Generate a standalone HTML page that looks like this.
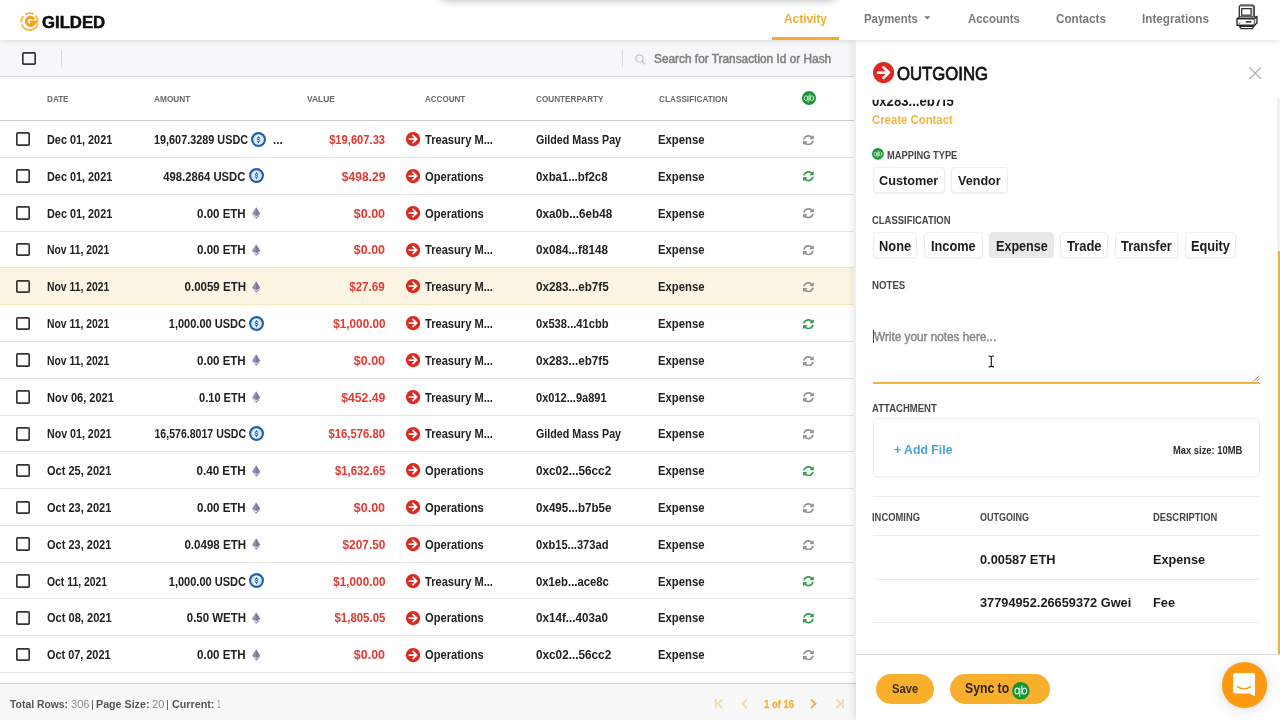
<!DOCTYPE html>
<html lang="en"><head><meta charset="utf-8"><title>Gilded - Activity</title>
<style>
html,body{margin:0;padding:0}
body{width:1280px;height:720px;overflow:hidden;position:relative;background:#fff;font-family:'Liberation Sans',sans-serif;color:#222}
.t{position:absolute;display:block;white-space:pre;line-height:1;margin:0}
.i{position:absolute;display:block;overflow:visible}
.abs,.hdr,.toolbar,.tfoot,.row,.ln,.btn,.cb,.panel{position:absolute;display:block;box-sizing:border-box;margin:0;padding:0}
nav,main,aside,section,footer,.tr,.thead,.tbody,.grp,a,button,label,h2,ul,li{position:static;display:block;margin:0;padding:0;border:0;background:none;font:inherit;color:inherit;list-style:none;text-decoration:none}
.cb{box-shadow:inset 0 0 0 1.65px #333;border-radius:1.8px;background:transparent}
.row{left:0;width:854px;border-bottom:1px solid #e4e4e4}
.row.sel{background:#fdf5e4;border-bottom-color:#f6e4bb;box-shadow:0 -1px 0 #f6e4bb}
.ln{height:1px;background:#ebebeb;left:872.7px;width:387.5px}
.btn{border:1px solid #eee;border-radius:3.5px;background:#fff;box-shadow:0 1px 1.5px rgba(0,0,0,.05)}
.btn.on{background:#e8e8e8;border-color:#e8e8e8;box-shadow:none}
.pill{position:absolute;background:#f9ae2c;border-radius:15px}
</style></head>
<body>
<div id="app" style="position:absolute;left:0;top:0;width:1280px;height:720px;overflow:hidden;will-change:transform">
<header class="hdr" style="left:0;top:0;width:1280px;height:40px;background:#fff;box-shadow:0 1px 5px rgba(0,0,0,.13);z-index:5">
<svg class="i" style="left:20.20px;top:11.90px;" width="19.20" height="19.20" viewBox="0 0 20 20"><circle cx="10" cy="10" r="8.8" fill="none" stroke="#f7b745" stroke-width="1.9" stroke-dasharray="6 2.2 7 2.4 22 2.4 7 2.4 3.9 0" transform="rotate(-100 10 10)"/><path d="M14.6 7.7A4.3 4.3 0 1 0 15 10.6H10.2" fill="none" stroke="#f5a21c" stroke-width="3.1"/><path d="M13 10.6h5.4" stroke="#f5a21c" stroke-width="3.1"/></svg>
<span class="t " style="top:14.00px;font-size:17.4px;font-weight:700;color:#0c0c0c;left:41.50px;transform-origin:0 14px;transform:scaleX(0.9618);-webkit-text-stroke:0.5px #0c0c0c;">GILDED</span>
<nav>
<span class="t " style="top:13.00px;font-size:12px;font-weight:700;color:#f0ae35;left:784.12px;transform-origin:0 10px;transform:scaleX(0.9908);">Activity</span>
<span class="t " style="top:13.00px;font-size:12px;font-weight:700;color:#7b7b7b;left:863.72px;transform-origin:0 10px;transform:scaleX(0.9481);">Payments</span>
<svg class="i" style="left:923.60px;top:16.40px;" width="6.60" height="3.60" viewBox="0 0 10 5"><path d="M0 0h10L5 5z" fill="#7b7b7b"/></svg>
<span class="t " style="top:13.00px;font-size:12px;font-weight:700;color:#7b7b7b;left:967.52px;transform-origin:0 10px;transform:scaleX(0.9501);">Accounts</span>
<span class="t " style="top:13.00px;font-size:12px;font-weight:700;color:#7b7b7b;left:1055.92px;transform-origin:0 10px;transform:scaleX(0.9730);">Contacts</span>
<span class="t " style="top:13.00px;font-size:12px;font-weight:700;color:#7b7b7b;left:1141.82px;transform-origin:0 10px;transform:scaleX(0.9751);">Integrations</span>
<div class="abs" style="left:772.3px;top:37.2px;width:66.7px;height:2.8px;background:#f4ac2c"></div>
</nav>
<svg class="i" style="left:1236.00px;top:3.60px;" width="22.40" height="25.40" viewBox="0 0 22 25"><g fill="none" stroke="#2b2b2b"><path d="M4.6 1.2h11.8l1.6 1.2v10.2H3.2V2.4z" fill="#fff" stroke-width="1.3"/><path d="M4.2 1.6h12.6" stroke-width="1.8" stroke="#666"/><path d="M17.3 2.6v10" stroke-width="1.8" stroke="#666"/><rect x="5.6" y="4.6" width="9.2" height="6.4" fill="#fff" stroke-width="1.2"/><path d="M1 14.6h17.2v6.4H1z" fill="#fff" stroke-width="1.4"/><path d="M18.2 14.6l2.4-2v6l-2.4 2.4" stroke-width="1.3" fill="#ddd"/><path d="M3.2 13l-2.2 1.6M20.6 12.6H18" stroke-width="1.2"/><path d="M9.6 17.6h5.4" stroke-width="1.5"/><path d="M3.6 18.2v1.2" stroke-width="1"/><path d="M3.4 22h14.2l-1.6 2.2H5z" fill="#fff" stroke-width="1.2"/></g></svg>
</header>
<div class="abs" style="z-index:10;left:441px;top:-42px;width:394px;height:40px;background:#fff;border-radius:0 0 5px 5px;box-shadow:0 2px 8px rgba(0,0,0,.33)"></div>
<section>
<div class="toolbar" style="left:0;top:40px;width:854px;height:36.6px;background:#f6f7f9;border-bottom:1px solid #d6d9dd">
<span class="cb" style="left:22.30px;top:11.90px;width:13.6px;height:13.6px"></span>
<div class="abs" style="left:61px;top:10px;width:1.3px;height:16.6px;background:#d9dbde"></div>
<div class="abs" style="left:621.7px;top:10px;width:1.3px;height:16.6px;background:#d9dbde"></div>
<svg class="i" style="left:635.20px;top:14.00px;" width="11.00" height="11.00" viewBox="0 0 11 11"><circle cx="4.4" cy="4.4" r="3.6" fill="none" stroke="#c4c4c4" stroke-width="1.2"/><path d="M7 7l3.4 3.4" stroke="#c4c4c4" stroke-width="1.3"/></svg>
</div>
<span class="t " style="top:53.00px;font-size:12px;color:#808080;left:653.82px;transform-origin:0 10px;transform:scaleX(0.9874);-webkit-text-stroke:0.5px #808080;">Search for Transaction Id or Hash</span>
</section>
<main>
<div class="thead">
<div class="abs" style="left:0;top:119.5px;width:854px;height:1.6px;background:#cdcdcd"></div>
<span class="t " style="top:94.00px;font-size:9.4px;font-weight:700;color:#6a6a6a;left:46.82px;transform-origin:0 8px;transform:scaleX(0.8680);">DATE</span>
<span class="t " style="top:94.00px;font-size:9.4px;font-weight:700;color:#6a6a6a;left:153.82px;transform-origin:0 8px;transform:scaleX(0.8836);">AMOUNT</span>
<span class="t " style="top:94.00px;font-size:9.4px;font-weight:700;color:#6a6a6a;left:306.62px;transform-origin:0 8px;transform:scaleX(0.8994);">VALUE</span>
<span class="t " style="top:94.00px;font-size:9.4px;font-weight:700;color:#6a6a6a;left:425.32px;transform-origin:0 8px;transform:scaleX(0.8566);">ACCOUNT</span>
<span class="t " style="top:94.00px;font-size:9.4px;font-weight:700;color:#6a6a6a;left:536.22px;transform-origin:0 8px;transform:scaleX(0.8723);">COUNTERPARTY</span>
<span class="t " style="top:94.00px;font-size:9.4px;font-weight:700;color:#6a6a6a;left:658.52px;transform-origin:0 8px;transform:scaleX(0.8768);">CLASSIFICATION</span>
<svg class="i" style="left:801.60px;top:91.30px;" width="14.00" height="14.00" viewBox="0 0 20 20"><circle cx="10" cy="10" r="10" fill="#1a9236"/><g fill="none" stroke="#d3f7da" stroke-width="1.3" stroke-linecap="round"><ellipse cx="5.8" cy="10.3" rx="2.45" ry="3.4"/><path d="M8.75 6.8v9.3"/><ellipse cx="14.2" cy="10.3" rx="2.45" ry="3.4"/><path d="M11.25 4.3v9.3"/></g></svg>
</div>
<div class="tbody">
<div class="tr">
<div class="row" style="top:121px;height:37px"></div>
<span class="cb" style="left:16.40px;top:132.40px;width:13.6px;height:13.6px"></span>
<span class="t " style="top:134.00px;font-size:12px;font-weight:700;color:#222;left:46.92px;transform-origin:0 10px;transform:scaleX(0.9056);">Dec 01, 2021</span>
<span class="t " style="top:134.00px;font-size:12px;font-weight:700;color:#222;left:153.92px;transform-origin:0 10px;transform:scaleX(0.9037);">19,607.3289 USDC</span>
<svg class="i" style="left:251.30px;top:131.60px;" width="15.00" height="15.00" viewBox="0 0 20 20"><circle cx="10" cy="10" r="10" fill="#1d5fab"/><circle cx="10" cy="10" r="7.1" fill="#eaf4ff"/><g fill="none" stroke-linecap="round"><path d="M7.2 4.9A5.6 5.6 0 0 0 7.2 15.1M12.8 4.9A5.6 5.6 0 0 1 12.8 15.1" stroke="#a9c6e8" stroke-width="0.9"/><path d="M11.9 8.5c-.3-1.4-3.7-1.5-3.7.2 0 1.7 3.7.9 3.7 2.7 0 1.7-3.4 1.7-3.8.2M10 5.9v1.3M10 12.9v1.3" stroke="#2c6cc0" stroke-width="1.35"/></g></svg>
<span class="t " style="top:134.00px;font-size:12px;font-weight:700;color:#222;left:273.02px;transform-origin:0 10px;transform:scaleX(0.9745);">...</span>
<span class="t " style="top:134.00px;font-size:12px;font-weight:700;color:#dd3b33;right:894.82px;transform-origin:100% 10px;transform:scaleX(0.9312);">$19,607.33</span>
<svg class="i" style="left:406.00px;top:132.10px;" width="14.20" height="14.20" viewBox="8 8 496 496"><path fill="#e0281e" d="M256 8c137 0 248 111 248 248S393 504 256 504 8 393 8 256 119 8 256 8zm-28.9 143.6l75.5 72.4H120c-13.3 0-24 10.7-24 24v16c0 13.3 10.7 24 24 24h182.6l-75.5 72.4c-9.7 9.3-9.9 24.8-.4 34.3l11 10.9c9.4 9.4 24.6 9.4 33.9 0L404.3 273c9.4-9.4 9.4-24.6 0-33.9L271.6 106.3c-9.4-9.4-24.6-9.4-33.9 0l-11 10.9c-9.5 9.6-9.3 25.1.4 34.4z"/></svg>
<span class="t " style="top:134.00px;font-size:12px;font-weight:700;color:#222;left:425.32px;transform-origin:0 10px;transform:scaleX(0.9262);">Treasury M...</span>
<span class="t " style="top:134.00px;font-size:12px;font-weight:700;color:#222;left:536.12px;transform-origin:0 10px;transform:scaleX(0.8918);">Gilded Mass Pay</span>
<span class="t " style="top:134.00px;font-size:12px;font-weight:700;color:#222;left:658.42px;transform-origin:0 10px;transform:scaleX(0.9433);">Expense</span>
<svg preserveAspectRatio="none" class="i" style="left:803.10px;top:134.60px;overflow:hidden;" width="10.80" height="10.40" viewBox="8 8 496 496"><path fill="#939393" d="M370.72 133.28C339.458 104.008 298.888 87.962 255.848 88c-77.458.068-144.328 53.178-162.791 126.85-1.344 5.363-6.122 9.15-11.651 9.15H24.103c-7.498 0-13.194-6.807-11.807-14.176C33.933 94.924 134.813 8 256 8c66.448 0 126.791 26.136 171.315 68.685L463.03 40.97C478.149 25.851 504 36.559 504 57.941V192c0 13.255-10.745 24-24 24H345.941c-21.382 0-32.09-25.851-16.971-40.971l41.75-41.749zM32 296h134.059c21.382 0 32.09 25.851 16.971 40.971l-41.75 41.75c31.262 29.273 71.835 45.319 114.876 45.28 77.418-.07 144.315-53.144 162.787-126.849 1.344-5.363 6.122-9.15 11.651-9.15h57.304c7.498 0 13.194 6.807 11.807 14.176C478.067 417.076 377.187 504 256 504c-66.448 0-126.791-26.136-171.315-68.685L48.97 471.03C33.851 486.149 8 475.441 8 454.059V320c0-13.255 10.745-24 24-24z"/></svg>
</div>
<div class="tr">
<div class="row" style="top:158px;height:37px"></div>
<span class="cb" style="left:16.40px;top:169.22px;width:13.6px;height:13.6px"></span>
<span class="t " style="top:171.00px;font-size:12px;font-weight:700;color:#222;left:46.92px;transform-origin:0 10px;transform:scaleX(0.9056);">Dec 01, 2021</span>
<span class="t " style="top:171.00px;font-size:12px;font-weight:700;color:#222;right:1034.22px;transform-origin:100% 10px;transform:scaleX(0.9401);">498.2864 USDC</span>
<svg class="i" style="left:248.90px;top:168.42px;" width="15.00" height="15.00" viewBox="0 0 20 20"><circle cx="10" cy="10" r="10" fill="#1d5fab"/><circle cx="10" cy="10" r="7.1" fill="#eaf4ff"/><g fill="none" stroke-linecap="round"><path d="M7.2 4.9A5.6 5.6 0 0 0 7.2 15.1M12.8 4.9A5.6 5.6 0 0 1 12.8 15.1" stroke="#a9c6e8" stroke-width="0.9"/><path d="M11.9 8.5c-.3-1.4-3.7-1.5-3.7.2 0 1.7 3.7.9 3.7 2.7 0 1.7-3.4 1.7-3.8.2M10 5.9v1.3M10 12.9v1.3" stroke="#2c6cc0" stroke-width="1.35"/></g></svg>
<span class="t " style="top:171.00px;font-size:12px;font-weight:700;color:#dd3b33;right:894.82px;transform-origin:100% 10px;transform:scaleX(1.0059);">$498.29</span>
<svg class="i" style="left:406.00px;top:168.92px;" width="14.20" height="14.20" viewBox="8 8 496 496"><path fill="#e0281e" d="M256 8c137 0 248 111 248 248S393 504 256 504 8 393 8 256 119 8 256 8zm-28.9 143.6l75.5 72.4H120c-13.3 0-24 10.7-24 24v16c0 13.3 10.7 24 24 24h182.6l-75.5 72.4c-9.7 9.3-9.9 24.8-.4 34.3l11 10.9c9.4 9.4 24.6 9.4 33.9 0L404.3 273c9.4-9.4 9.4-24.6 0-33.9L271.6 106.3c-9.4-9.4-24.6-9.4-33.9 0l-11 10.9c-9.5 9.6-9.3 25.1.4 34.4z"/></svg>
<span class="t " style="top:171.00px;font-size:12px;font-weight:700;color:#222;left:425.32px;transform-origin:0 10px;transform:scaleX(0.9274);">Operations</span>
<span class="t " style="top:171.00px;font-size:12px;font-weight:700;color:#222;left:536.12px;transform-origin:0 10px;transform:scaleX(0.9481);">0xba1...bf2c8</span>
<span class="t " style="top:171.00px;font-size:12px;font-weight:700;color:#222;left:658.42px;transform-origin:0 10px;transform:scaleX(0.9433);">Expense</span>
<svg preserveAspectRatio="none" class="i" style="left:803.10px;top:171.42px;overflow:hidden;" width="10.80" height="10.40" viewBox="8 8 496 496"><path fill="#34a04c" d="M370.72 133.28C339.458 104.008 298.888 87.962 255.848 88c-77.458.068-144.328 53.178-162.791 126.85-1.344 5.363-6.122 9.15-11.651 9.15H24.103c-7.498 0-13.194-6.807-11.807-14.176C33.933 94.924 134.813 8 256 8c66.448 0 126.791 26.136 171.315 68.685L463.03 40.97C478.149 25.851 504 36.559 504 57.941V192c0 13.255-10.745 24-24 24H345.941c-21.382 0-32.09-25.851-16.971-40.971l41.75-41.749zM32 296h134.059c21.382 0 32.09 25.851 16.971 40.971l-41.75 41.75c31.262 29.273 71.835 45.319 114.876 45.28 77.418-.07 144.315-53.144 162.787-126.849 1.344-5.363 6.122-9.15 11.651-9.15h57.304c7.498 0 13.194 6.807 11.807 14.176C478.067 417.076 377.187 504 256 504c-66.448 0-126.791-26.136-171.315-68.685L48.97 471.03C33.851 486.149 8 475.441 8 454.059V320c0-13.255 10.745-24 24-24z"/></svg>
</div>
<div class="tr">
<div class="row" style="top:195px;height:37px"></div>
<span class="cb" style="left:16.40px;top:206.04px;width:13.6px;height:13.6px"></span>
<span class="t " style="top:208.00px;font-size:12px;font-weight:700;color:#222;left:46.92px;transform-origin:0 10px;transform:scaleX(0.9056);">Dec 01, 2021</span>
<span class="t " style="top:208.00px;font-size:12px;font-weight:700;color:#222;right:1034.22px;transform-origin:100% 10px;transform:scaleX(0.9597);">0.00 ETH</span>
<svg class="i" style="left:252.40px;top:207.04px;" width="8.20" height="11.80" viewBox="0 0 10 14"><path d="M5 0L0 8.2 5 11.2 10 8.2z" fill="#8e8fb0"/><path d="M5 0v11.2L10 8.2z" fill="#7b7c9c"/><path d="M0 9.3L5 14 10 9.3 5 12.3z" fill="#9a9bb9"/><path d="M5 14l5-4.7-5 3z" fill="#8586a6"/></svg>
<span class="t " style="top:208.00px;font-size:12px;font-weight:700;color:#dd3b33;right:894.82px;transform-origin:100% 10px;transform:scaleX(1.0408);">$0.00</span>
<svg class="i" style="left:406.00px;top:205.74px;" width="14.20" height="14.20" viewBox="8 8 496 496"><path fill="#e0281e" d="M256 8c137 0 248 111 248 248S393 504 256 504 8 393 8 256 119 8 256 8zm-28.9 143.6l75.5 72.4H120c-13.3 0-24 10.7-24 24v16c0 13.3 10.7 24 24 24h182.6l-75.5 72.4c-9.7 9.3-9.9 24.8-.4 34.3l11 10.9c9.4 9.4 24.6 9.4 33.9 0L404.3 273c9.4-9.4 9.4-24.6 0-33.9L271.6 106.3c-9.4-9.4-24.6-9.4-33.9 0l-11 10.9c-9.5 9.6-9.3 25.1.4 34.4z"/></svg>
<span class="t " style="top:208.00px;font-size:12px;font-weight:700;color:#222;left:425.32px;transform-origin:0 10px;transform:scaleX(0.9274);">Operations</span>
<span class="t " style="top:208.00px;font-size:12px;font-weight:700;color:#222;left:536.12px;transform-origin:0 10px;transform:scaleX(0.9757);">0xa0b...6eb48</span>
<span class="t " style="top:208.00px;font-size:12px;font-weight:700;color:#222;left:658.42px;transform-origin:0 10px;transform:scaleX(0.9433);">Expense</span>
<svg preserveAspectRatio="none" class="i" style="left:803.10px;top:208.24px;overflow:hidden;" width="10.80" height="10.40" viewBox="8 8 496 496"><path fill="#939393" d="M370.72 133.28C339.458 104.008 298.888 87.962 255.848 88c-77.458.068-144.328 53.178-162.791 126.85-1.344 5.363-6.122 9.15-11.651 9.15H24.103c-7.498 0-13.194-6.807-11.807-14.176C33.933 94.924 134.813 8 256 8c66.448 0 126.791 26.136 171.315 68.685L463.03 40.97C478.149 25.851 504 36.559 504 57.941V192c0 13.255-10.745 24-24 24H345.941c-21.382 0-32.09-25.851-16.971-40.971l41.75-41.749zM32 296h134.059c21.382 0 32.09 25.851 16.971 40.971l-41.75 41.75c31.262 29.273 71.835 45.319 114.876 45.28 77.418-.07 144.315-53.144 162.787-126.849 1.344-5.363 6.122-9.15 11.651-9.15h57.304c7.498 0 13.194 6.807 11.807 14.176C478.067 417.076 377.187 504 256 504c-66.448 0-126.791-26.136-171.315-68.685L48.97 471.03C33.851 486.149 8 475.441 8 454.059V320c0-13.255 10.745-24 24-24z"/></svg>
</div>
<div class="tr">
<div class="row" style="top:232px;height:36px"></div>
<span class="cb" style="left:16.40px;top:242.86px;width:13.6px;height:13.6px"></span>
<span class="t " style="top:244.00px;font-size:12px;font-weight:700;color:#222;left:46.92px;transform-origin:0 10px;transform:scaleX(0.8631);">Nov 11, 2021</span>
<span class="t " style="top:244.00px;font-size:12px;font-weight:700;color:#222;right:1034.22px;transform-origin:100% 10px;transform:scaleX(0.9597);">0.00 ETH</span>
<svg class="i" style="left:252.40px;top:243.86px;" width="8.20" height="11.80" viewBox="0 0 10 14"><path d="M5 0L0 8.2 5 11.2 10 8.2z" fill="#8e8fb0"/><path d="M5 0v11.2L10 8.2z" fill="#7b7c9c"/><path d="M0 9.3L5 14 10 9.3 5 12.3z" fill="#9a9bb9"/><path d="M5 14l5-4.7-5 3z" fill="#8586a6"/></svg>
<span class="t " style="top:244.00px;font-size:12px;font-weight:700;color:#dd3b33;right:894.82px;transform-origin:100% 10px;transform:scaleX(1.0408);">$0.00</span>
<svg class="i" style="left:406.00px;top:242.56px;" width="14.20" height="14.20" viewBox="8 8 496 496"><path fill="#e0281e" d="M256 8c137 0 248 111 248 248S393 504 256 504 8 393 8 256 119 8 256 8zm-28.9 143.6l75.5 72.4H120c-13.3 0-24 10.7-24 24v16c0 13.3 10.7 24 24 24h182.6l-75.5 72.4c-9.7 9.3-9.9 24.8-.4 34.3l11 10.9c9.4 9.4 24.6 9.4 33.9 0L404.3 273c9.4-9.4 9.4-24.6 0-33.9L271.6 106.3c-9.4-9.4-24.6-9.4-33.9 0l-11 10.9c-9.5 9.6-9.3 25.1.4 34.4z"/></svg>
<span class="t " style="top:244.00px;font-size:12px;font-weight:700;color:#222;left:425.32px;transform-origin:0 10px;transform:scaleX(0.9262);">Treasury M...</span>
<span class="t " style="top:244.00px;font-size:12px;font-weight:700;color:#222;left:536.12px;transform-origin:0 10px;transform:scaleX(0.9703);">0x084...f8148</span>
<span class="t " style="top:244.00px;font-size:12px;font-weight:700;color:#222;left:658.42px;transform-origin:0 10px;transform:scaleX(0.9433);">Expense</span>
<svg preserveAspectRatio="none" class="i" style="left:803.10px;top:245.06px;overflow:hidden;" width="10.80" height="10.40" viewBox="8 8 496 496"><path fill="#939393" d="M370.72 133.28C339.458 104.008 298.888 87.962 255.848 88c-77.458.068-144.328 53.178-162.791 126.85-1.344 5.363-6.122 9.15-11.651 9.15H24.103c-7.498 0-13.194-6.807-11.807-14.176C33.933 94.924 134.813 8 256 8c66.448 0 126.791 26.136 171.315 68.685L463.03 40.97C478.149 25.851 504 36.559 504 57.941V192c0 13.255-10.745 24-24 24H345.941c-21.382 0-32.09-25.851-16.971-40.971l41.75-41.749zM32 296h134.059c21.382 0 32.09 25.851 16.971 40.971l-41.75 41.75c31.262 29.273 71.835 45.319 114.876 45.28 77.418-.07 144.315-53.144 162.787-126.849 1.344-5.363 6.122-9.15 11.651-9.15h57.304c7.498 0 13.194 6.807 11.807 14.176C478.067 417.076 377.187 504 256 504c-66.448 0-126.791-26.136-171.315-68.685L48.97 471.03C33.851 486.149 8 475.441 8 454.059V320c0-13.255 10.745-24 24-24z"/></svg>
</div>
<div class="tr">
<div class="row sel" style="top:268px;height:37px"></div>
<span class="cb" style="left:16.40px;top:279.68px;width:13.6px;height:13.6px"></span>
<span class="t " style="top:281.00px;font-size:12px;font-weight:700;color:#222;left:46.92px;transform-origin:0 10px;transform:scaleX(0.8631);">Nov 11, 2021</span>
<span class="t " style="top:281.00px;font-size:12px;font-weight:700;color:#222;right:1034.22px;transform-origin:100% 10px;transform:scaleX(0.9606);">0.0059 ETH</span>
<svg class="i" style="left:252.40px;top:280.68px;" width="8.20" height="11.80" viewBox="0 0 10 14"><path d="M5 0L0 8.2 5 11.2 10 8.2z" fill="#8e8fb0"/><path d="M5 0v11.2L10 8.2z" fill="#7b7c9c"/><path d="M0 9.3L5 14 10 9.3 5 12.3z" fill="#9a9bb9"/><path d="M5 14l5-4.7-5 3z" fill="#8586a6"/></svg>
<span class="t " style="top:281.00px;font-size:12px;font-weight:700;color:#dd3b33;right:894.82px;transform-origin:100% 10px;transform:scaleX(0.9683);">$27.69</span>
<svg class="i" style="left:406.00px;top:279.38px;" width="14.20" height="14.20" viewBox="8 8 496 496"><path fill="#e0281e" d="M256 8c137 0 248 111 248 248S393 504 256 504 8 393 8 256 119 8 256 8zm-28.9 143.6l75.5 72.4H120c-13.3 0-24 10.7-24 24v16c0 13.3 10.7 24 24 24h182.6l-75.5 72.4c-9.7 9.3-9.9 24.8-.4 34.3l11 10.9c9.4 9.4 24.6 9.4 33.9 0L404.3 273c9.4-9.4 9.4-24.6 0-33.9L271.6 106.3c-9.4-9.4-24.6-9.4-33.9 0l-11 10.9c-9.5 9.6-9.3 25.1.4 34.4z"/></svg>
<span class="t " style="top:281.00px;font-size:12px;font-weight:700;color:#222;left:425.32px;transform-origin:0 10px;transform:scaleX(0.9262);">Treasury M...</span>
<span class="t " style="top:281.00px;font-size:12px;font-weight:700;color:#222;left:536.12px;transform-origin:0 10px;transform:scaleX(0.9725);">0x283...eb7f5</span>
<span class="t " style="top:281.00px;font-size:12px;font-weight:700;color:#222;left:658.42px;transform-origin:0 10px;transform:scaleX(0.9433);">Expense</span>
<svg preserveAspectRatio="none" class="i" style="left:803.10px;top:281.88px;overflow:hidden;" width="10.80" height="10.40" viewBox="8 8 496 496"><path fill="#939393" d="M370.72 133.28C339.458 104.008 298.888 87.962 255.848 88c-77.458.068-144.328 53.178-162.791 126.85-1.344 5.363-6.122 9.15-11.651 9.15H24.103c-7.498 0-13.194-6.807-11.807-14.176C33.933 94.924 134.813 8 256 8c66.448 0 126.791 26.136 171.315 68.685L463.03 40.97C478.149 25.851 504 36.559 504 57.941V192c0 13.255-10.745 24-24 24H345.941c-21.382 0-32.09-25.851-16.971-40.971l41.75-41.749zM32 296h134.059c21.382 0 32.09 25.851 16.971 40.971l-41.75 41.75c31.262 29.273 71.835 45.319 114.876 45.28 77.418-.07 144.315-53.144 162.787-126.849 1.344-5.363 6.122-9.15 11.651-9.15h57.304c7.498 0 13.194 6.807 11.807 14.176C478.067 417.076 377.187 504 256 504c-66.448 0-126.791-26.136-171.315-68.685L48.97 471.03C33.851 486.149 8 475.441 8 454.059V320c0-13.255 10.745-24 24-24z"/></svg>
</div>
<div class="tr">
<div class="row" style="top:305px;height:37px"></div>
<span class="cb" style="left:16.40px;top:316.50px;width:13.6px;height:13.6px"></span>
<span class="t " style="top:318.00px;font-size:12px;font-weight:700;color:#222;left:46.92px;transform-origin:0 10px;transform:scaleX(0.8631);">Nov 11, 2021</span>
<span class="t " style="top:318.00px;font-size:12px;font-weight:700;color:#222;right:1034.22px;transform-origin:100% 10px;transform:scaleX(0.9196);">1,000.00 USDC</span>
<svg class="i" style="left:248.90px;top:315.70px;" width="15.00" height="15.00" viewBox="0 0 20 20"><circle cx="10" cy="10" r="10" fill="#1d5fab"/><circle cx="10" cy="10" r="7.1" fill="#eaf4ff"/><g fill="none" stroke-linecap="round"><path d="M7.2 4.9A5.6 5.6 0 0 0 7.2 15.1M12.8 4.9A5.6 5.6 0 0 1 12.8 15.1" stroke="#a9c6e8" stroke-width="0.9"/><path d="M11.9 8.5c-.3-1.4-3.7-1.5-3.7.2 0 1.7 3.7.9 3.7 2.7 0 1.7-3.4 1.7-3.8.2M10 5.9v1.3M10 12.9v1.3" stroke="#2c6cc0" stroke-width="1.35"/></g></svg>
<span class="t " style="top:318.00px;font-size:12px;font-weight:700;color:#dd3b33;right:894.82px;transform-origin:100% 10px;transform:scaleX(0.9744);">$1,000.00</span>
<svg class="i" style="left:406.00px;top:316.20px;" width="14.20" height="14.20" viewBox="8 8 496 496"><path fill="#e0281e" d="M256 8c137 0 248 111 248 248S393 504 256 504 8 393 8 256 119 8 256 8zm-28.9 143.6l75.5 72.4H120c-13.3 0-24 10.7-24 24v16c0 13.3 10.7 24 24 24h182.6l-75.5 72.4c-9.7 9.3-9.9 24.8-.4 34.3l11 10.9c9.4 9.4 24.6 9.4 33.9 0L404.3 273c9.4-9.4 9.4-24.6 0-33.9L271.6 106.3c-9.4-9.4-24.6-9.4-33.9 0l-11 10.9c-9.5 9.6-9.3 25.1.4 34.4z"/></svg>
<span class="t " style="top:318.00px;font-size:12px;font-weight:700;color:#222;left:425.32px;transform-origin:0 10px;transform:scaleX(0.9262);">Treasury M...</span>
<span class="t " style="top:318.00px;font-size:12px;font-weight:700;color:#222;left:536.12px;transform-origin:0 10px;transform:scaleX(0.9300);">0x538...41cbb</span>
<span class="t " style="top:318.00px;font-size:12px;font-weight:700;color:#222;left:658.42px;transform-origin:0 10px;transform:scaleX(0.9433);">Expense</span>
<svg preserveAspectRatio="none" class="i" style="left:803.10px;top:318.70px;overflow:hidden;" width="10.80" height="10.40" viewBox="8 8 496 496"><path fill="#34a04c" d="M370.72 133.28C339.458 104.008 298.888 87.962 255.848 88c-77.458.068-144.328 53.178-162.791 126.85-1.344 5.363-6.122 9.15-11.651 9.15H24.103c-7.498 0-13.194-6.807-11.807-14.176C33.933 94.924 134.813 8 256 8c66.448 0 126.791 26.136 171.315 68.685L463.03 40.97C478.149 25.851 504 36.559 504 57.941V192c0 13.255-10.745 24-24 24H345.941c-21.382 0-32.09-25.851-16.971-40.971l41.75-41.749zM32 296h134.059c21.382 0 32.09 25.851 16.971 40.971l-41.75 41.75c31.262 29.273 71.835 45.319 114.876 45.28 77.418-.07 144.315-53.144 162.787-126.849 1.344-5.363 6.122-9.15 11.651-9.15h57.304c7.498 0 13.194 6.807 11.807 14.176C478.067 417.076 377.187 504 256 504c-66.448 0-126.791-26.136-171.315-68.685L48.97 471.03C33.851 486.149 8 475.441 8 454.059V320c0-13.255 10.745-24 24-24z"/></svg>
</div>
<div class="tr">
<div class="row" style="top:342px;height:37px"></div>
<span class="cb" style="left:16.40px;top:353.32px;width:13.6px;height:13.6px"></span>
<span class="t " style="top:355.00px;font-size:12px;font-weight:700;color:#222;left:46.92px;transform-origin:0 10px;transform:scaleX(0.8631);">Nov 11, 2021</span>
<span class="t " style="top:355.00px;font-size:12px;font-weight:700;color:#222;right:1034.22px;transform-origin:100% 10px;transform:scaleX(0.9597);">0.00 ETH</span>
<svg class="i" style="left:252.40px;top:354.32px;" width="8.20" height="11.80" viewBox="0 0 10 14"><path d="M5 0L0 8.2 5 11.2 10 8.2z" fill="#8e8fb0"/><path d="M5 0v11.2L10 8.2z" fill="#7b7c9c"/><path d="M0 9.3L5 14 10 9.3 5 12.3z" fill="#9a9bb9"/><path d="M5 14l5-4.7-5 3z" fill="#8586a6"/></svg>
<span class="t " style="top:355.00px;font-size:12px;font-weight:700;color:#dd3b33;right:894.82px;transform-origin:100% 10px;transform:scaleX(1.0408);">$0.00</span>
<svg class="i" style="left:406.00px;top:353.02px;" width="14.20" height="14.20" viewBox="8 8 496 496"><path fill="#e0281e" d="M256 8c137 0 248 111 248 248S393 504 256 504 8 393 8 256 119 8 256 8zm-28.9 143.6l75.5 72.4H120c-13.3 0-24 10.7-24 24v16c0 13.3 10.7 24 24 24h182.6l-75.5 72.4c-9.7 9.3-9.9 24.8-.4 34.3l11 10.9c9.4 9.4 24.6 9.4 33.9 0L404.3 273c9.4-9.4 9.4-24.6 0-33.9L271.6 106.3c-9.4-9.4-24.6-9.4-33.9 0l-11 10.9c-9.5 9.6-9.3 25.1.4 34.4z"/></svg>
<span class="t " style="top:355.00px;font-size:12px;font-weight:700;color:#222;left:425.32px;transform-origin:0 10px;transform:scaleX(0.9262);">Treasury M...</span>
<span class="t " style="top:355.00px;font-size:12px;font-weight:700;color:#222;left:536.12px;transform-origin:0 10px;transform:scaleX(0.9725);">0x283...eb7f5</span>
<span class="t " style="top:355.00px;font-size:12px;font-weight:700;color:#222;left:658.42px;transform-origin:0 10px;transform:scaleX(0.9433);">Expense</span>
<svg preserveAspectRatio="none" class="i" style="left:803.10px;top:355.52px;overflow:hidden;" width="10.80" height="10.40" viewBox="8 8 496 496"><path fill="#939393" d="M370.72 133.28C339.458 104.008 298.888 87.962 255.848 88c-77.458.068-144.328 53.178-162.791 126.85-1.344 5.363-6.122 9.15-11.651 9.15H24.103c-7.498 0-13.194-6.807-11.807-14.176C33.933 94.924 134.813 8 256 8c66.448 0 126.791 26.136 171.315 68.685L463.03 40.97C478.149 25.851 504 36.559 504 57.941V192c0 13.255-10.745 24-24 24H345.941c-21.382 0-32.09-25.851-16.971-40.971l41.75-41.749zM32 296h134.059c21.382 0 32.09 25.851 16.971 40.971l-41.75 41.75c31.262 29.273 71.835 45.319 114.876 45.28 77.418-.07 144.315-53.144 162.787-126.849 1.344-5.363 6.122-9.15 11.651-9.15h57.304c7.498 0 13.194 6.807 11.807 14.176C478.067 417.076 377.187 504 256 504c-66.448 0-126.791-26.136-171.315-68.685L48.97 471.03C33.851 486.149 8 475.441 8 454.059V320c0-13.255 10.745-24 24-24z"/></svg>
</div>
<div class="tr">
<div class="row" style="top:379px;height:37px"></div>
<span class="cb" style="left:16.40px;top:390.14px;width:13.6px;height:13.6px"></span>
<span class="t " style="top:392.00px;font-size:12px;font-weight:700;color:#222;left:46.92px;transform-origin:0 10px;transform:scaleX(0.9187);">Nov 06, 2021</span>
<span class="t " style="top:392.00px;font-size:12px;font-weight:700;color:#222;right:1034.22px;transform-origin:100% 10px;transform:scaleX(0.9197);">0.10 ETH</span>
<svg class="i" style="left:252.40px;top:391.14px;" width="8.20" height="11.80" viewBox="0 0 10 14"><path d="M5 0L0 8.2 5 11.2 10 8.2z" fill="#8e8fb0"/><path d="M5 0v11.2L10 8.2z" fill="#7b7c9c"/><path d="M0 9.3L5 14 10 9.3 5 12.3z" fill="#9a9bb9"/><path d="M5 14l5-4.7-5 3z" fill="#8586a6"/></svg>
<span class="t " style="top:392.00px;font-size:12px;font-weight:700;color:#dd3b33;right:894.82px;transform-origin:100% 10px;transform:scaleX(1.0174);">$452.49</span>
<svg class="i" style="left:406.00px;top:389.84px;" width="14.20" height="14.20" viewBox="8 8 496 496"><path fill="#e0281e" d="M256 8c137 0 248 111 248 248S393 504 256 504 8 393 8 256 119 8 256 8zm-28.9 143.6l75.5 72.4H120c-13.3 0-24 10.7-24 24v16c0 13.3 10.7 24 24 24h182.6l-75.5 72.4c-9.7 9.3-9.9 24.8-.4 34.3l11 10.9c9.4 9.4 24.6 9.4 33.9 0L404.3 273c9.4-9.4 9.4-24.6 0-33.9L271.6 106.3c-9.4-9.4-24.6-9.4-33.9 0l-11 10.9c-9.5 9.6-9.3 25.1.4 34.4z"/></svg>
<span class="t " style="top:392.00px;font-size:12px;font-weight:700;color:#222;left:425.32px;transform-origin:0 10px;transform:scaleX(0.9262);">Treasury M...</span>
<span class="t " style="top:392.00px;font-size:12px;font-weight:700;color:#222;left:536.12px;transform-origin:0 10px;transform:scaleX(0.9197);">0x012...9a891</span>
<span class="t " style="top:392.00px;font-size:12px;font-weight:700;color:#222;left:658.42px;transform-origin:0 10px;transform:scaleX(0.9433);">Expense</span>
<svg preserveAspectRatio="none" class="i" style="left:803.10px;top:392.34px;overflow:hidden;" width="10.80" height="10.40" viewBox="8 8 496 496"><path fill="#939393" d="M370.72 133.28C339.458 104.008 298.888 87.962 255.848 88c-77.458.068-144.328 53.178-162.791 126.85-1.344 5.363-6.122 9.15-11.651 9.15H24.103c-7.498 0-13.194-6.807-11.807-14.176C33.933 94.924 134.813 8 256 8c66.448 0 126.791 26.136 171.315 68.685L463.03 40.97C478.149 25.851 504 36.559 504 57.941V192c0 13.255-10.745 24-24 24H345.941c-21.382 0-32.09-25.851-16.971-40.971l41.75-41.749zM32 296h134.059c21.382 0 32.09 25.851 16.971 40.971l-41.75 41.75c31.262 29.273 71.835 45.319 114.876 45.28 77.418-.07 144.315-53.144 162.787-126.849 1.344-5.363 6.122-9.15 11.651-9.15h57.304c7.498 0 13.194 6.807 11.807 14.176C478.067 417.076 377.187 504 256 504c-66.448 0-126.791-26.136-171.315-68.685L48.97 471.03C33.851 486.149 8 475.441 8 454.059V320c0-13.255 10.745-24 24-24z"/></svg>
</div>
<div class="tr">
<div class="row" style="top:416px;height:36px"></div>
<span class="cb" style="left:16.40px;top:426.96px;width:13.6px;height:13.6px"></span>
<span class="t " style="top:428.00px;font-size:12px;font-weight:700;color:#222;left:46.92px;transform-origin:0 10px;transform:scaleX(0.8866);">Nov 01, 2021</span>
<span class="t " style="top:428.00px;font-size:12px;font-weight:700;color:#222;right:1034.22px;transform-origin:100% 10px;transform:scaleX(0.8804);">16,576.8017 USDC</span>
<svg class="i" style="left:248.90px;top:426.16px;" width="15.00" height="15.00" viewBox="0 0 20 20"><circle cx="10" cy="10" r="10" fill="#1d5fab"/><circle cx="10" cy="10" r="7.1" fill="#eaf4ff"/><g fill="none" stroke-linecap="round"><path d="M7.2 4.9A5.6 5.6 0 0 0 7.2 15.1M12.8 4.9A5.6 5.6 0 0 1 12.8 15.1" stroke="#a9c6e8" stroke-width="0.9"/><path d="M11.9 8.5c-.3-1.4-3.7-1.5-3.7.2 0 1.7 3.7.9 3.7 2.7 0 1.7-3.4 1.7-3.8.2M10 5.9v1.3M10 12.9v1.3" stroke="#2c6cc0" stroke-width="1.35"/></g></svg>
<span class="t " style="top:428.00px;font-size:12px;font-weight:700;color:#dd3b33;right:894.82px;transform-origin:100% 10px;transform:scaleX(0.9418);">$16,576.80</span>
<svg class="i" style="left:406.00px;top:426.66px;" width="14.20" height="14.20" viewBox="8 8 496 496"><path fill="#e0281e" d="M256 8c137 0 248 111 248 248S393 504 256 504 8 393 8 256 119 8 256 8zm-28.9 143.6l75.5 72.4H120c-13.3 0-24 10.7-24 24v16c0 13.3 10.7 24 24 24h182.6l-75.5 72.4c-9.7 9.3-9.9 24.8-.4 34.3l11 10.9c9.4 9.4 24.6 9.4 33.9 0L404.3 273c9.4-9.4 9.4-24.6 0-33.9L271.6 106.3c-9.4-9.4-24.6-9.4-33.9 0l-11 10.9c-9.5 9.6-9.3 25.1.4 34.4z"/></svg>
<span class="t " style="top:428.00px;font-size:12px;font-weight:700;color:#222;left:425.32px;transform-origin:0 10px;transform:scaleX(0.9262);">Treasury M...</span>
<span class="t " style="top:428.00px;font-size:12px;font-weight:700;color:#222;left:536.12px;transform-origin:0 10px;transform:scaleX(0.8918);">Gilded Mass Pay</span>
<span class="t " style="top:428.00px;font-size:12px;font-weight:700;color:#222;left:658.42px;transform-origin:0 10px;transform:scaleX(0.9433);">Expense</span>
<svg preserveAspectRatio="none" class="i" style="left:803.10px;top:429.16px;overflow:hidden;" width="10.80" height="10.40" viewBox="8 8 496 496"><path fill="#939393" d="M370.72 133.28C339.458 104.008 298.888 87.962 255.848 88c-77.458.068-144.328 53.178-162.791 126.85-1.344 5.363-6.122 9.15-11.651 9.15H24.103c-7.498 0-13.194-6.807-11.807-14.176C33.933 94.924 134.813 8 256 8c66.448 0 126.791 26.136 171.315 68.685L463.03 40.97C478.149 25.851 504 36.559 504 57.941V192c0 13.255-10.745 24-24 24H345.941c-21.382 0-32.09-25.851-16.971-40.971l41.75-41.749zM32 296h134.059c21.382 0 32.09 25.851 16.971 40.971l-41.75 41.75c31.262 29.273 71.835 45.319 114.876 45.28 77.418-.07 144.315-53.144 162.787-126.849 1.344-5.363 6.122-9.15 11.651-9.15h57.304c7.498 0 13.194 6.807 11.807 14.176C478.067 417.076 377.187 504 256 504c-66.448 0-126.791-26.136-171.315-68.685L48.97 471.03C33.851 486.149 8 475.441 8 454.059V320c0-13.255 10.745-24 24-24z"/></svg>
</div>
<div class="tr">
<div class="row" style="top:452px;height:37px"></div>
<span class="cb" style="left:16.40px;top:463.78px;width:13.6px;height:13.6px"></span>
<span class="t " style="top:465.00px;font-size:12px;font-weight:700;color:#222;left:46.92px;transform-origin:0 10px;transform:scaleX(0.9187);">Oct 25, 2021</span>
<span class="t " style="top:465.00px;font-size:12px;font-weight:700;color:#222;right:1034.22px;transform-origin:100% 10px;transform:scaleX(0.9718);">0.40 ETH</span>
<svg class="i" style="left:252.40px;top:464.78px;" width="8.20" height="11.80" viewBox="0 0 10 14"><path d="M5 0L0 8.2 5 11.2 10 8.2z" fill="#8e8fb0"/><path d="M5 0v11.2L10 8.2z" fill="#7b7c9c"/><path d="M0 9.3L5 14 10 9.3 5 12.3z" fill="#9a9bb9"/><path d="M5 14l5-4.7-5 3z" fill="#8586a6"/></svg>
<span class="t " style="top:465.00px;font-size:12px;font-weight:700;color:#dd3b33;right:894.82px;transform-origin:100% 10px;transform:scaleX(0.9448);">$1,632.65</span>
<svg class="i" style="left:406.00px;top:463.48px;" width="14.20" height="14.20" viewBox="8 8 496 496"><path fill="#e0281e" d="M256 8c137 0 248 111 248 248S393 504 256 504 8 393 8 256 119 8 256 8zm-28.9 143.6l75.5 72.4H120c-13.3 0-24 10.7-24 24v16c0 13.3 10.7 24 24 24h182.6l-75.5 72.4c-9.7 9.3-9.9 24.8-.4 34.3l11 10.9c9.4 9.4 24.6 9.4 33.9 0L404.3 273c9.4-9.4 9.4-24.6 0-33.9L271.6 106.3c-9.4-9.4-24.6-9.4-33.9 0l-11 10.9c-9.5 9.6-9.3 25.1.4 34.4z"/></svg>
<span class="t " style="top:465.00px;font-size:12px;font-weight:700;color:#222;left:425.32px;transform-origin:0 10px;transform:scaleX(0.9274);">Operations</span>
<span class="t " style="top:465.00px;font-size:12px;font-weight:700;color:#222;left:536.12px;transform-origin:0 10px;transform:scaleX(0.9797);">0xc02...56cc2</span>
<span class="t " style="top:465.00px;font-size:12px;font-weight:700;color:#222;left:658.42px;transform-origin:0 10px;transform:scaleX(0.9433);">Expense</span>
<svg preserveAspectRatio="none" class="i" style="left:803.10px;top:465.98px;overflow:hidden;" width="10.80" height="10.40" viewBox="8 8 496 496"><path fill="#34a04c" d="M370.72 133.28C339.458 104.008 298.888 87.962 255.848 88c-77.458.068-144.328 53.178-162.791 126.85-1.344 5.363-6.122 9.15-11.651 9.15H24.103c-7.498 0-13.194-6.807-11.807-14.176C33.933 94.924 134.813 8 256 8c66.448 0 126.791 26.136 171.315 68.685L463.03 40.97C478.149 25.851 504 36.559 504 57.941V192c0 13.255-10.745 24-24 24H345.941c-21.382 0-32.09-25.851-16.971-40.971l41.75-41.749zM32 296h134.059c21.382 0 32.09 25.851 16.971 40.971l-41.75 41.75c31.262 29.273 71.835 45.319 114.876 45.28 77.418-.07 144.315-53.144 162.787-126.849 1.344-5.363 6.122-9.15 11.651-9.15h57.304c7.498 0 13.194 6.807 11.807 14.176C478.067 417.076 377.187 504 256 504c-66.448 0-126.791-26.136-171.315-68.685L48.97 471.03C33.851 486.149 8 475.441 8 454.059V320c0-13.255 10.745-24 24-24z"/></svg>
</div>
<div class="tr">
<div class="row" style="top:489px;height:37px"></div>
<span class="cb" style="left:16.40px;top:500.60px;width:13.6px;height:13.6px"></span>
<span class="t " style="top:502.00px;font-size:12px;font-weight:700;color:#222;left:46.92px;transform-origin:0 10px;transform:scaleX(0.9174);">Oct 23, 2021</span>
<span class="t " style="top:502.00px;font-size:12px;font-weight:700;color:#222;right:1034.22px;transform-origin:100% 10px;transform:scaleX(0.9597);">0.00 ETH</span>
<svg class="i" style="left:252.40px;top:501.60px;" width="8.20" height="11.80" viewBox="0 0 10 14"><path d="M5 0L0 8.2 5 11.2 10 8.2z" fill="#8e8fb0"/><path d="M5 0v11.2L10 8.2z" fill="#7b7c9c"/><path d="M0 9.3L5 14 10 9.3 5 12.3z" fill="#9a9bb9"/><path d="M5 14l5-4.7-5 3z" fill="#8586a6"/></svg>
<span class="t " style="top:502.00px;font-size:12px;font-weight:700;color:#dd3b33;right:894.82px;transform-origin:100% 10px;transform:scaleX(1.0408);">$0.00</span>
<svg class="i" style="left:406.00px;top:500.30px;" width="14.20" height="14.20" viewBox="8 8 496 496"><path fill="#e0281e" d="M256 8c137 0 248 111 248 248S393 504 256 504 8 393 8 256 119 8 256 8zm-28.9 143.6l75.5 72.4H120c-13.3 0-24 10.7-24 24v16c0 13.3 10.7 24 24 24h182.6l-75.5 72.4c-9.7 9.3-9.9 24.8-.4 34.3l11 10.9c9.4 9.4 24.6 9.4 33.9 0L404.3 273c9.4-9.4 9.4-24.6 0-33.9L271.6 106.3c-9.4-9.4-24.6-9.4-33.9 0l-11 10.9c-9.5 9.6-9.3 25.1.4 34.4z"/></svg>
<span class="t " style="top:502.00px;font-size:12px;font-weight:700;color:#222;left:425.32px;transform-origin:0 10px;transform:scaleX(0.9274);">Operations</span>
<span class="t " style="top:502.00px;font-size:12px;font-weight:700;color:#222;left:536.12px;transform-origin:0 10px;transform:scaleX(0.9659);">0x495...b7b5e</span>
<span class="t " style="top:502.00px;font-size:12px;font-weight:700;color:#222;left:658.42px;transform-origin:0 10px;transform:scaleX(0.9433);">Expense</span>
<svg preserveAspectRatio="none" class="i" style="left:803.10px;top:502.80px;overflow:hidden;" width="10.80" height="10.40" viewBox="8 8 496 496"><path fill="#939393" d="M370.72 133.28C339.458 104.008 298.888 87.962 255.848 88c-77.458.068-144.328 53.178-162.791 126.85-1.344 5.363-6.122 9.15-11.651 9.15H24.103c-7.498 0-13.194-6.807-11.807-14.176C33.933 94.924 134.813 8 256 8c66.448 0 126.791 26.136 171.315 68.685L463.03 40.97C478.149 25.851 504 36.559 504 57.941V192c0 13.255-10.745 24-24 24H345.941c-21.382 0-32.09-25.851-16.971-40.971l41.75-41.749zM32 296h134.059c21.382 0 32.09 25.851 16.971 40.971l-41.75 41.75c31.262 29.273 71.835 45.319 114.876 45.28 77.418-.07 144.315-53.144 162.787-126.849 1.344-5.363 6.122-9.15 11.651-9.15h57.304c7.498 0 13.194 6.807 11.807 14.176C478.067 417.076 377.187 504 256 504c-66.448 0-126.791-26.136-171.315-68.685L48.97 471.03C33.851 486.149 8 475.441 8 454.059V320c0-13.255 10.745-24 24-24z"/></svg>
</div>
<div class="tr">
<div class="row" style="top:526px;height:37px"></div>
<span class="cb" style="left:16.40px;top:537.42px;width:13.6px;height:13.6px"></span>
<span class="t " style="top:539.00px;font-size:12px;font-weight:700;color:#222;left:46.92px;transform-origin:0 10px;transform:scaleX(0.9174);">Oct 23, 2021</span>
<span class="t " style="top:539.00px;font-size:12px;font-weight:700;color:#222;right:1034.22px;transform-origin:100% 10px;transform:scaleX(0.9620);">0.0498 ETH</span>
<svg class="i" style="left:252.40px;top:538.42px;" width="8.20" height="11.80" viewBox="0 0 10 14"><path d="M5 0L0 8.2 5 11.2 10 8.2z" fill="#8e8fb0"/><path d="M5 0v11.2L10 8.2z" fill="#7b7c9c"/><path d="M0 9.3L5 14 10 9.3 5 12.3z" fill="#9a9bb9"/><path d="M5 14l5-4.7-5 3z" fill="#8586a6"/></svg>
<span class="t " style="top:539.00px;font-size:12px;font-weight:700;color:#dd3b33;right:894.82px;transform-origin:100% 10px;transform:scaleX(0.9883);">$207.50</span>
<svg class="i" style="left:406.00px;top:537.12px;" width="14.20" height="14.20" viewBox="8 8 496 496"><path fill="#e0281e" d="M256 8c137 0 248 111 248 248S393 504 256 504 8 393 8 256 119 8 256 8zm-28.9 143.6l75.5 72.4H120c-13.3 0-24 10.7-24 24v16c0 13.3 10.7 24 24 24h182.6l-75.5 72.4c-9.7 9.3-9.9 24.8-.4 34.3l11 10.9c9.4 9.4 24.6 9.4 33.9 0L404.3 273c9.4-9.4 9.4-24.6 0-33.9L271.6 106.3c-9.4-9.4-24.6-9.4-33.9 0l-11 10.9c-9.5 9.6-9.3 25.1.4 34.4z"/></svg>
<span class="t " style="top:539.00px;font-size:12px;font-weight:700;color:#222;left:425.32px;transform-origin:0 10px;transform:scaleX(0.9274);">Operations</span>
<span class="t " style="top:539.00px;font-size:12px;font-weight:700;color:#222;left:536.12px;transform-origin:0 10px;transform:scaleX(0.9290);">0xb15...373ad</span>
<span class="t " style="top:539.00px;font-size:12px;font-weight:700;color:#222;left:658.42px;transform-origin:0 10px;transform:scaleX(0.9433);">Expense</span>
<svg preserveAspectRatio="none" class="i" style="left:803.10px;top:539.62px;overflow:hidden;" width="10.80" height="10.40" viewBox="8 8 496 496"><path fill="#939393" d="M370.72 133.28C339.458 104.008 298.888 87.962 255.848 88c-77.458.068-144.328 53.178-162.791 126.85-1.344 5.363-6.122 9.15-11.651 9.15H24.103c-7.498 0-13.194-6.807-11.807-14.176C33.933 94.924 134.813 8 256 8c66.448 0 126.791 26.136 171.315 68.685L463.03 40.97C478.149 25.851 504 36.559 504 57.941V192c0 13.255-10.745 24-24 24H345.941c-21.382 0-32.09-25.851-16.971-40.971l41.75-41.749zM32 296h134.059c21.382 0 32.09 25.851 16.971 40.971l-41.75 41.75c31.262 29.273 71.835 45.319 114.876 45.28 77.418-.07 144.315-53.144 162.787-126.849 1.344-5.363 6.122-9.15 11.651-9.15h57.304c7.498 0 13.194 6.807 11.807 14.176C478.067 417.076 377.187 504 256 504c-66.448 0-126.791-26.136-171.315-68.685L48.97 471.03C33.851 486.149 8 475.441 8 454.059V320c0-13.255 10.745-24 24-24z"/></svg>
</div>
<div class="tr">
<div class="row" style="top:563px;height:36px"></div>
<span class="cb" style="left:16.40px;top:574.24px;width:13.6px;height:13.6px"></span>
<span class="t " style="top:576.00px;font-size:12px;font-weight:700;color:#222;left:46.92px;transform-origin:0 10px;transform:scaleX(0.8650);">Oct 11, 2021</span>
<span class="t " style="top:576.00px;font-size:12px;font-weight:700;color:#222;right:1034.22px;transform-origin:100% 10px;transform:scaleX(0.9196);">1,000.00 USDC</span>
<svg class="i" style="left:248.90px;top:573.44px;" width="15.00" height="15.00" viewBox="0 0 20 20"><circle cx="10" cy="10" r="10" fill="#1d5fab"/><circle cx="10" cy="10" r="7.1" fill="#eaf4ff"/><g fill="none" stroke-linecap="round"><path d="M7.2 4.9A5.6 5.6 0 0 0 7.2 15.1M12.8 4.9A5.6 5.6 0 0 1 12.8 15.1" stroke="#a9c6e8" stroke-width="0.9"/><path d="M11.9 8.5c-.3-1.4-3.7-1.5-3.7.2 0 1.7 3.7.9 3.7 2.7 0 1.7-3.4 1.7-3.8.2M10 5.9v1.3M10 12.9v1.3" stroke="#2c6cc0" stroke-width="1.35"/></g></svg>
<span class="t " style="top:576.00px;font-size:12px;font-weight:700;color:#dd3b33;right:894.82px;transform-origin:100% 10px;transform:scaleX(0.9744);">$1,000.00</span>
<svg class="i" style="left:406.00px;top:573.94px;" width="14.20" height="14.20" viewBox="8 8 496 496"><path fill="#e0281e" d="M256 8c137 0 248 111 248 248S393 504 256 504 8 393 8 256 119 8 256 8zm-28.9 143.6l75.5 72.4H120c-13.3 0-24 10.7-24 24v16c0 13.3 10.7 24 24 24h182.6l-75.5 72.4c-9.7 9.3-9.9 24.8-.4 34.3l11 10.9c9.4 9.4 24.6 9.4 33.9 0L404.3 273c9.4-9.4 9.4-24.6 0-33.9L271.6 106.3c-9.4-9.4-24.6-9.4-33.9 0l-11 10.9c-9.5 9.6-9.3 25.1.4 34.4z"/></svg>
<span class="t " style="top:576.00px;font-size:12px;font-weight:700;color:#222;left:425.32px;transform-origin:0 10px;transform:scaleX(0.9262);">Treasury M...</span>
<span class="t " style="top:576.00px;font-size:12px;font-weight:700;color:#222;left:536.12px;transform-origin:0 10px;transform:scaleX(0.9409);">0x1eb...ace8c</span>
<span class="t " style="top:576.00px;font-size:12px;font-weight:700;color:#222;left:658.42px;transform-origin:0 10px;transform:scaleX(0.9433);">Expense</span>
<svg preserveAspectRatio="none" class="i" style="left:803.10px;top:576.44px;overflow:hidden;" width="10.80" height="10.40" viewBox="8 8 496 496"><path fill="#34a04c" d="M370.72 133.28C339.458 104.008 298.888 87.962 255.848 88c-77.458.068-144.328 53.178-162.791 126.85-1.344 5.363-6.122 9.15-11.651 9.15H24.103c-7.498 0-13.194-6.807-11.807-14.176C33.933 94.924 134.813 8 256 8c66.448 0 126.791 26.136 171.315 68.685L463.03 40.97C478.149 25.851 504 36.559 504 57.941V192c0 13.255-10.745 24-24 24H345.941c-21.382 0-32.09-25.851-16.971-40.971l41.75-41.749zM32 296h134.059c21.382 0 32.09 25.851 16.971 40.971l-41.75 41.75c31.262 29.273 71.835 45.319 114.876 45.28 77.418-.07 144.315-53.144 162.787-126.849 1.344-5.363 6.122-9.15 11.651-9.15h57.304c7.498 0 13.194 6.807 11.807 14.176C478.067 417.076 377.187 504 256 504c-66.448 0-126.791-26.136-171.315-68.685L48.97 471.03C33.851 486.149 8 475.441 8 454.059V320c0-13.255 10.745-24 24-24z"/></svg>
</div>
<div class="tr">
<div class="row" style="top:599px;height:37px"></div>
<span class="cb" style="left:16.40px;top:611.06px;width:13.6px;height:13.6px"></span>
<span class="t " style="top:612.00px;font-size:12px;font-weight:700;color:#222;left:46.92px;transform-origin:0 10px;transform:scaleX(0.9232);">Oct 08, 2021</span>
<span class="t " style="top:612.00px;font-size:12px;font-weight:700;color:#222;right:1034.22px;transform-origin:100% 10px;transform:scaleX(0.9545);">0.50 WETH</span>
<svg class="i" style="left:252.40px;top:612.06px;" width="8.20" height="11.80" viewBox="0 0 10 14"><path d="M5 0L0 8.2 5 11.2 10 8.2z" fill="#8e8fb0"/><path d="M5 0v11.2L10 8.2z" fill="#7b7c9c"/><path d="M0 9.3L5 14 10 9.3 5 12.3z" fill="#9a9bb9"/><path d="M5 14l5-4.7-5 3z" fill="#8586a6"/></svg>
<span class="t " style="top:612.00px;font-size:12px;font-weight:700;color:#dd3b33;right:894.82px;transform-origin:100% 10px;transform:scaleX(0.9533);">$1,805.05</span>
<svg class="i" style="left:406.00px;top:610.76px;" width="14.20" height="14.20" viewBox="8 8 496 496"><path fill="#e0281e" d="M256 8c137 0 248 111 248 248S393 504 256 504 8 393 8 256 119 8 256 8zm-28.9 143.6l75.5 72.4H120c-13.3 0-24 10.7-24 24v16c0 13.3 10.7 24 24 24h182.6l-75.5 72.4c-9.7 9.3-9.9 24.8-.4 34.3l11 10.9c9.4 9.4 24.6 9.4 33.9 0L404.3 273c9.4-9.4 9.4-24.6 0-33.9L271.6 106.3c-9.4-9.4-24.6-9.4-33.9 0l-11 10.9c-9.5 9.6-9.3 25.1.4 34.4z"/></svg>
<span class="t " style="top:612.00px;font-size:12px;font-weight:700;color:#222;left:425.32px;transform-origin:0 10px;transform:scaleX(0.9274);">Operations</span>
<span class="t " style="top:612.00px;font-size:12px;font-weight:700;color:#222;left:536.12px;transform-origin:0 10px;transform:scaleX(0.9720);">0x14f...403a0</span>
<span class="t " style="top:612.00px;font-size:12px;font-weight:700;color:#222;left:658.42px;transform-origin:0 10px;transform:scaleX(0.9433);">Expense</span>
<svg preserveAspectRatio="none" class="i" style="left:803.10px;top:613.26px;overflow:hidden;" width="10.80" height="10.40" viewBox="8 8 496 496"><path fill="#34a04c" d="M370.72 133.28C339.458 104.008 298.888 87.962 255.848 88c-77.458.068-144.328 53.178-162.791 126.85-1.344 5.363-6.122 9.15-11.651 9.15H24.103c-7.498 0-13.194-6.807-11.807-14.176C33.933 94.924 134.813 8 256 8c66.448 0 126.791 26.136 171.315 68.685L463.03 40.97C478.149 25.851 504 36.559 504 57.941V192c0 13.255-10.745 24-24 24H345.941c-21.382 0-32.09-25.851-16.971-40.971l41.75-41.749zM32 296h134.059c21.382 0 32.09 25.851 16.971 40.971l-41.75 41.75c31.262 29.273 71.835 45.319 114.876 45.28 77.418-.07 144.315-53.144 162.787-126.849 1.344-5.363 6.122-9.15 11.651-9.15h57.304c7.498 0 13.194 6.807 11.807 14.176C478.067 417.076 377.187 504 256 504c-66.448 0-126.791-26.136-171.315-68.685L48.97 471.03C33.851 486.149 8 475.441 8 454.059V320c0-13.255 10.745-24 24-24z"/></svg>
</div>
<div class="tr">
<div class="row" style="top:636px;height:37px"></div>
<span class="cb" style="left:16.40px;top:647.88px;width:13.6px;height:13.6px"></span>
<span class="t " style="top:649.00px;font-size:12px;font-weight:700;color:#222;left:46.92px;transform-origin:0 10px;transform:scaleX(0.9062);">Oct 07, 2021</span>
<span class="t " style="top:649.00px;font-size:12px;font-weight:700;color:#222;right:1034.22px;transform-origin:100% 10px;transform:scaleX(0.9597);">0.00 ETH</span>
<svg class="i" style="left:252.40px;top:648.88px;" width="8.20" height="11.80" viewBox="0 0 10 14"><path d="M5 0L0 8.2 5 11.2 10 8.2z" fill="#8e8fb0"/><path d="M5 0v11.2L10 8.2z" fill="#7b7c9c"/><path d="M0 9.3L5 14 10 9.3 5 12.3z" fill="#9a9bb9"/><path d="M5 14l5-4.7-5 3z" fill="#8586a6"/></svg>
<span class="t " style="top:649.00px;font-size:12px;font-weight:700;color:#dd3b33;right:894.82px;transform-origin:100% 10px;transform:scaleX(1.0408);">$0.00</span>
<svg class="i" style="left:406.00px;top:647.58px;" width="14.20" height="14.20" viewBox="8 8 496 496"><path fill="#e0281e" d="M256 8c137 0 248 111 248 248S393 504 256 504 8 393 8 256 119 8 256 8zm-28.9 143.6l75.5 72.4H120c-13.3 0-24 10.7-24 24v16c0 13.3 10.7 24 24 24h182.6l-75.5 72.4c-9.7 9.3-9.9 24.8-.4 34.3l11 10.9c9.4 9.4 24.6 9.4 33.9 0L404.3 273c9.4-9.4 9.4-24.6 0-33.9L271.6 106.3c-9.4-9.4-24.6-9.4-33.9 0l-11 10.9c-9.5 9.6-9.3 25.1.4 34.4z"/></svg>
<span class="t " style="top:649.00px;font-size:12px;font-weight:700;color:#222;left:425.32px;transform-origin:0 10px;transform:scaleX(0.9274);">Operations</span>
<span class="t " style="top:649.00px;font-size:12px;font-weight:700;color:#222;left:536.12px;transform-origin:0 10px;transform:scaleX(0.9797);">0xc02...56cc2</span>
<span class="t " style="top:649.00px;font-size:12px;font-weight:700;color:#222;left:658.42px;transform-origin:0 10px;transform:scaleX(0.9433);">Expense</span>
<svg preserveAspectRatio="none" class="i" style="left:803.10px;top:650.08px;overflow:hidden;" width="10.80" height="10.40" viewBox="8 8 496 496"><path fill="#939393" d="M370.72 133.28C339.458 104.008 298.888 87.962 255.848 88c-77.458.068-144.328 53.178-162.791 126.85-1.344 5.363-6.122 9.15-11.651 9.15H24.103c-7.498 0-13.194-6.807-11.807-14.176C33.933 94.924 134.813 8 256 8c66.448 0 126.791 26.136 171.315 68.685L463.03 40.97C478.149 25.851 504 36.559 504 57.941V192c0 13.255-10.745 24-24 24H345.941c-21.382 0-32.09-25.851-16.971-40.971l41.75-41.749zM32 296h134.059c21.382 0 32.09 25.851 16.971 40.971l-41.75 41.75c31.262 29.273 71.835 45.319 114.876 45.28 77.418-.07 144.315-53.144 162.787-126.849 1.344-5.363 6.122-9.15 11.651-9.15h57.304c7.498 0 13.194 6.807 11.807 14.176C478.067 417.076 377.187 504 256 504c-66.448 0-126.791-26.136-171.315-68.685L48.97 471.03C33.851 486.149 8 475.441 8 454.059V320c0-13.255 10.745-24 24-24z"/></svg>
</div>
</div>
<footer>
<div class="tfoot" style="left:0;top:683.2px;width:856px;height:36.8px;background:#f8f8f8;border-top:1.7px solid #cfcfcf"></div>
<span class="t " style="top:699.00px;font-size:11px;font-weight:700;color:#555;left:9.86px;transform-origin:0 9px;transform:scaleX(0.9442);">Total Rows:</span>
<span class="t " style="top:699.00px;font-size:11px;color:#8a8a8a;left:70.56px;transform-origin:0 9px;transform:scaleX(1.0066);">306</span>
<span class="t " style="top:699.00px;font-size:11px;color:#666;left:91.16px;transform-origin:0 9px;transform:scaleX(1.0673);">|</span>
<span class="t " style="top:699.00px;font-size:11px;font-weight:700;color:#555;left:95.96px;transform-origin:0 9px;transform:scaleX(0.9718);">Page Size:</span>
<span class="t " style="top:699.00px;font-size:11px;color:#8a8a8a;left:151.56px;transform-origin:0 9px;transform:scaleX(1.0188);">20</span>
<span class="t " style="top:699.00px;font-size:11px;color:#666;left:166.16px;transform-origin:0 9px;transform:scaleX(1.0673);">|</span>
<span class="t " style="top:699.00px;font-size:11px;font-weight:700;color:#555;left:171.56px;transform-origin:0 9px;transform:scaleX(0.9767);">Current:</span>
<span class="t " style="top:699.00px;font-size:11px;color:#8a8a8a;left:217.16px;transform-origin:0 9px;transform:scaleX(0.6008);">1</span>
<svg class="i" style="left:715.00px;top:699.40px;" width="7.60" height="9.40" viewBox="0 0 8 10"><path d="M0.8 0v10" stroke="#f7dba4" stroke-width="2"/><path d="M7.6 0.4L3 5l4.6 4.6" fill="none" stroke="#f7dba4" stroke-width="2.1"/></svg>
<svg class="i" style="left:741.20px;top:699.40px;" width="6.80" height="9.40" viewBox="0 0 7 10"><path d="M6 0.5L1.4 5 6 9.5" fill="none" stroke="#f7dba4" stroke-width="2.2"/></svg>
<span class="t " style="top:699.00px;font-size:11px;font-weight:700;color:#f2b13f;left:764.16px;transform-origin:0 9px;transform:scaleX(0.8629);-webkit-text-stroke:0.3px #f2b13f;">1 of 16</span>
<svg class="i" style="left:810.00px;top:699.40px;" width="6.80" height="9.40" viewBox="0 0 7 10"><path d="M1 0.5L5.6 5 1 9.5" fill="none" stroke="#f2b13f" stroke-width="2.2"/></svg>
<svg class="i" style="left:835.70px;top:699.40px;" width="7.60" height="9.40" viewBox="0 0 8 10"><path d="M7.2 0v10" stroke="#f7dba4" stroke-width="2"/><path d="M0.4 0.4L5 5 0.4 9.6" fill="none" stroke="#f7dba4" stroke-width="2.1"/></svg>
</footer>
</main>
<aside>
<div class="panel" style="left:856px;top:40px;width:424px;height:680px;background:#fff;box-shadow:-1px 0 9px rgba(0,0,0,.14);z-index:3"></div>
<div class="abs" style="z-index:4;left:0;top:0;width:1280px;height:720px">
<svg class="i" style="left:872.50px;top:62.00px;" width="21.20" height="21.20" viewBox="8 8 496 496"><path fill="#e0281e" d="M256 8c137 0 248 111 248 248S393 504 256 504 8 393 8 256 119 8 256 8zm-28.9 143.6l75.5 72.4H120c-13.3 0-24 10.7-24 24v16c0 13.3 10.7 24 24 24h182.6l-75.5 72.4c-9.7 9.3-9.9 24.8-.4 34.3l11 10.9c9.4 9.4 24.6 9.4 33.9 0L404.3 273c9.4-9.4 9.4-24.6 0-33.9L271.6 106.3c-9.4-9.4-24.6-9.4-33.9 0l-11 10.9c-9.5 9.6-9.3 25.1.4 34.4z"/></svg>
<span class="t " style="top:64.00px;font-size:19px;color:#111;left:897.44px;transform-origin:0 16px;transform:scaleX(0.8808);-webkit-text-stroke:0.8px #111;">OUTGOING</span>
<svg class="i" style="left:1248.60px;top:67.10px;" width="12.40" height="12.40" viewBox="0 0 12 12"><path d="M0.5 0.5l11 11M11.5 0.5l-11 11" stroke="#b0b0b0" stroke-width="1.3"/></svg>
<div class="abs" style="left:860px;top:98.2px;width:400px;height:12px;overflow:hidden">
</div>
<span class="t " style="top:94.00px;font-size:14.4px;font-weight:700;color:#1a1a1a;left:872.42px;transform-origin:0 12px;transform:scaleX(0.9123);clip-path:inset(5.8px 0 0 0);">0x283...eb7f5</span>
<span class="t " style="top:114.00px;font-size:12px;font-weight:700;color:#f2b544;left:872.32px;transform-origin:0 10px;transform:scaleX(0.9461);">Create Contact</span>
<svg class="i" style="left:872.30px;top:148.40px;" width="11.80" height="11.80" viewBox="0 0 20 20"><circle cx="10" cy="10" r="10" fill="#1a9236"/><g fill="none" stroke="#d3f7da" stroke-width="1.3" stroke-linecap="round"><ellipse cx="5.8" cy="10.3" rx="2.45" ry="3.4"/><path d="M8.75 6.8v9.3"/><ellipse cx="14.2" cy="10.3" rx="2.45" ry="3.4"/><path d="M11.25 4.3v9.3"/></g></svg>
<span class="t " style="top:151.00px;font-size:10.4px;font-weight:700;color:#474747;left:887.08px;transform-origin:0 8px;transform:scaleX(0.8956);">MAPPING TYPE</span>
<div class="btn" style="left:872.7px;top:167.3px;width:72.2px;height:25.4px"></div>
<span class="t " style="top:174.00px;font-size:13.6px;font-weight:700;color:#1c1c1c;left:879.26px;transform-origin:0 11px;transform:scaleX(0.9344);">Customer</span>
<div class="btn" style="left:951.4px;top:167.3px;width:56.2px;height:25.4px"></div>
<span class="t " style="top:174.00px;font-size:13.6px;font-weight:700;color:#1c1c1c;left:958.26px;transform-origin:0 11px;transform:scaleX(0.9264);">Vendor</span>
<span class="t " style="top:216.00px;font-size:10.4px;font-weight:700;color:#474747;left:872.38px;transform-origin:0 8px;transform:scaleX(0.9089);">CLASSIFICATION</span>
<div class="btn" style="left:872.7px;top:232.2px;width:44.8px;height:25.7px"></div>
<span class="t " style="top:239.00px;font-size:14px;font-weight:700;color:#1c1c1c;left:879.44px;transform-origin:0 12px;transform:scaleX(0.9177);">None</span>
<div class="btn" style="left:924.4px;top:232.2px;width:58.3px;height:25.7px"></div>
<span class="t " style="top:239.00px;font-size:14px;font-weight:700;color:#1c1c1c;left:931.04px;transform-origin:0 12px;transform:scaleX(0.9103);">Income</span>
<div class="btn on" style="left:989.2px;top:232.2px;width:64.4px;height:25.7px"></div>
<span class="t " style="top:239.00px;font-size:14px;font-weight:700;color:#1c1c1c;left:995.54px;transform-origin:0 12px;transform:scaleX(0.8998);">Expense</span>
<div class="btn" style="left:1060.4px;top:232.2px;width:47.7px;height:25.7px"></div>
<span class="t " style="top:239.00px;font-size:14px;font-weight:700;color:#1c1c1c;left:1067.04px;transform-origin:0 12px;transform:scaleX(0.9240);">Trade</span>
<div class="btn" style="left:1114.5px;top:232.2px;width:63.2px;height:25.7px"></div>
<span class="t " style="top:239.00px;font-size:14px;font-weight:700;color:#1c1c1c;left:1121.24px;transform-origin:0 12px;transform:scaleX(0.9198);">Transfer</span>
<div class="btn" style="left:1184.6px;top:232.2px;width:51.9px;height:25.7px"></div>
<span class="t " style="top:239.00px;font-size:14px;font-weight:700;color:#1c1c1c;left:1191.24px;transform-origin:0 12px;transform:scaleX(0.9097);">Equity</span>
<span class="t " style="top:281.00px;font-size:10.4px;font-weight:700;color:#474747;left:872.38px;transform-origin:0 8px;transform:scaleX(0.9311);">NOTES</span>
<div class="abs" style="left:872.7px;top:381.8px;width:387.5px;height:2px;background:#f3b43c"></div>
<div class="abs" style="left:872.6px;top:330px;width:1px;height:13.4px;background:#444"></div>
<span class="t " style="top:331.00px;font-size:12px;color:#888;left:873.52px;transform-origin:0 10px;transform:scaleX(0.9812);-webkit-text-stroke:0.45px #888;">Write your notes here...</span>
<svg class="i" style="left:1252.60px;top:374.60px;" width="6.40" height="6.40" viewBox="0 0 6 6"><path d="M0.4 6L6 0.4M3.2 6L6 3.2" stroke="#777" stroke-width="0.8"/></svg>
<svg class="i" style="left:987.60px;top:355.20px;" width="6.60" height="12.80" viewBox="0 0 7 13"><path d="M0.6 0.8C2.4 0.6 3.3 1.2 3.5 2C3.7 1.2 4.6 0.6 6.4 0.8M0.6 12.2C2.4 12.4 3.3 11.8 3.5 11C3.7 11.8 4.6 12.4 6.4 12.2M3.5 1.6v9.8" fill="none" stroke="#111" stroke-width="1.2"/></svg>
<span class="t " style="top:404.00px;font-size:10.4px;font-weight:700;color:#474747;left:872.38px;transform-origin:0 8px;transform:scaleX(0.9182);">ATTACHMENT</span>
<div class="abs" style="left:872.7px;top:418.4px;width:387.5px;height:58.8px;border:1px solid #eeeeee;border-radius:4px;box-shadow:0 1px 2px rgba(0,0,0,.03)"></div>
<span class="t " style="top:443.00px;font-size:13.6px;font-weight:700;color:#45a5d6;left:894.26px;transform-origin:0 11px;transform:scaleX(0.9020);">+ Add File</span>
<span class="t " style="top:445.00px;font-size:10.8px;font-weight:700;color:#2c2c2c;left:1173.37px;transform-origin:0 9px;transform:scaleX(0.8678);">Max size: 10MB</span>
<div class="ln" style="top:496px"></div>
<span class="t " style="top:513.00px;font-size:10.4px;font-weight:700;color:#474747;left:872.38px;transform-origin:0 8px;transform:scaleX(0.9044);">INCOMING</span>
<span class="t " style="top:513.00px;font-size:10.4px;font-weight:700;color:#474747;left:980.18px;transform-origin:0 8px;transform:scaleX(0.8649);">OUTGOING</span>
<span class="t " style="top:513.00px;font-size:10.4px;font-weight:700;color:#474747;left:1152.88px;transform-origin:0 8px;transform:scaleX(0.9059);">DESCRIPTION</span>
<div class="ln" style="top:535.4px"></div>
<span class="t " style="top:553.00px;font-size:13.6px;font-weight:700;color:#1c1c1c;left:980.06px;transform-origin:0 11px;transform:scaleX(0.9423);">0.00587 ETH</span>
<span class="t " style="top:553.00px;font-size:13.6px;font-weight:700;color:#1c1c1c;left:1152.76px;transform-origin:0 11px;transform:scaleX(0.9314);">Expense</span>
<div class="ln" style="top:578.9px"></div>
<span class="t " style="top:596.00px;font-size:13.6px;font-weight:700;color:#1c1c1c;left:980.06px;transform-origin:0 11px;transform:scaleX(0.9396);">37794952.26659372 Gwei</span>
<span class="t " style="top:596.00px;font-size:13.6px;font-weight:700;color:#1c1c1c;left:1152.76px;transform-origin:0 11px;transform:scaleX(0.9424);">Fee</span>
<div class="ln" style="top:622.1px"></div>
<div class="abs" style="left:1277px;top:98px;width:3px;height:556px;background:#f1f1f1"></div>
<div class="abs" style="left:1277.6px;top:251px;width:2.4px;height:402.5px;background:#e9b53a"></div>
<div class="abs" style="left:856px;top:654px;width:424px;height:1px;background:#dcdcdc"></div>
<div class="pill" style="left:876.3px;top:673.9px;width:57.9px;height:30px"></div>
<span class="t " style="top:683.00px;font-size:12px;font-weight:700;color:#3b2a12;left:892.22px;transform-origin:0 10px;transform:scaleX(0.9332);">Save</span>
<div class="pill" style="left:949.7px;top:673.9px;width:100.5px;height:30px"></div>
<span class="t " style="top:681.00px;font-size:14px;font-weight:700;color:#2e2210;left:965.44px;transform-origin:0 12px;transform:scaleX(0.8723);">Sync to</span>
<svg class="i" style="left:1012.40px;top:681.80px;" width="17.60" height="17.60" viewBox="0 0 20 20"><circle cx="10" cy="10" r="10" fill="#1a9236"/><g fill="none" stroke="#d3f7da" stroke-width="1.3" stroke-linecap="round"><ellipse cx="5.8" cy="10.3" rx="2.45" ry="3.4"/><path d="M8.75 6.8v9.3"/><ellipse cx="14.2" cy="10.3" rx="2.45" ry="3.4"/><path d="M11.25 4.3v9.3"/></g></svg>
<div class="abs" style="left:1221.5px;top:662.2px;width:45.4px;height:45.4px;border-radius:50%;background:#fd9a0f;box-shadow:0 1px 6px rgba(0,0,0,.08),0 2px 18px rgba(0,0,0,.1)"></div>
<svg class="i" style="left:1232.20px;top:672.20px;" width="24.00" height="26.00" viewBox="0 0 24 26"><path d="M3 1h18a2 2 0 0 1 2 2v21.6l-5-3.2H3a2 2 0 0 1-2-2V3a2 2 0 0 1 2-2z" fill="#fff"/><path d="M5.4 14.6c3.8 3 9.4 3 13.2 0" fill="none" stroke="#fd9a0f" stroke-width="1.4" stroke-linecap="round"/></svg>
</div>
</aside>
</div>
</body></html>
